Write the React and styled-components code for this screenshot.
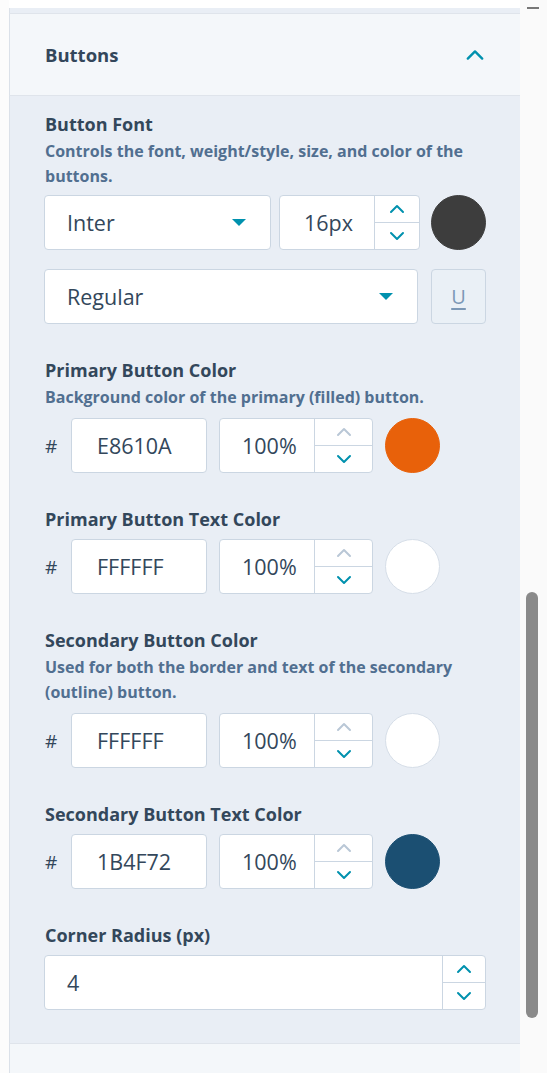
import styled, { createGlobalStyle } from 'styled-components';

const TEAL = '#0091ae';
const TEXT = '#33475b';
const MUTED = '#516f90';
const LINE = '#cbd6e2';

const GlobalStyle = createGlobalStyle`
  html, body { margin: 0; padding: 0; background: #ffffff; }
  body { font-family: "Open Sans", Lato, sans-serif; color: ${TEXT}; }
  * { box-sizing: border-box; }
`;

const Page = styled.div`
  display: flex;
  height: 1073px;
  overflow: hidden;
  background: #ffffff;
`;

const Gutter = styled.div`
  width: 9px;
  flex-shrink: 0;
  background: #fcfcfc;
`;

const Panel = styled.div`
  width: 511px;
  flex-shrink: 0;
  display: flex;
  flex-direction: column;
  padding-top: 8px;
  background: #ffffff;
`;

const PrevSection = styled.div`
  height: 6px;
  background: #e9eef5;
  border-left: 1px solid #dbe1e9;
  border-bottom: 1px solid #dfe4eb;
`;

const Header = styled.div`
  height: 82px;
  display: flex;
  align-items: center;
  justify-content: space-between;
  padding: 0 35px 0 35px;
  background: #f4f7fa;
  border-left: 1px solid #dbe1e9;
  border-bottom: 1px solid #dfe4eb;
`;

const HeaderTitle = styled.div`
  font-size: 18.5px;
  font-weight: 700;
  color: ${TEXT};
`;

const Body = styled.div`
  display: flex;
  flex-direction: column;
  gap: 34px;
  padding: 16px 34px 33px;
  background: #e9eef5;
  border-left: 1px solid #dbe1e9;
  border-bottom: 1px solid #dfe4eb;
`;

const NextSection = styled.div`
  flex: 1;
  background: #f4f7fa;
  border-left: 1px solid #dbe1e9;
`;

const Group = styled.div`
  display: flex;
  flex-direction: column;
`;

const Label = styled.div`
  font-size: 18px;
  line-height: 24px;
  font-weight: 700;
  padding-left: 1px;
  color: ${TEXT};
`;

const Desc = styled.div`
  margin-top: 3px;
  font-size: 16px;
  line-height: 25px;
  font-weight: 700;
  padding-left: 1px;
  color: ${MUTED};
`;

const Row = styled.div`
  display: flex;
  align-items: center;
  gap: ${(p) => p.gap || 12}px;
  margin-top: ${(p) => p.top ?? 8}px;
`;

const Box = styled.div`
  display: flex;
  align-items: stretch;
  width: ${(p) => (p.width ? `${p.width}px` : 'auto')};
  flex: ${(p) => (p.width ? '0 0 auto' : '1')};
  height: 55px;
  background: #ffffff;
  border: 1px solid ${LINE};
  border-radius: 4px;
  overflow: hidden;
`;

const Value = styled.div`
  flex: 1;
  display: flex;
  align-items: center;
  padding-left: ${(p) => p.pad ?? 22}px;
  font-size: 21.5px;
  color: ${TEXT};
`;

const Caret = styled.div`
  align-self: center;
  margin-right: 24px;
  width: 0;
  height: 0;
  border-left: 7px solid transparent;
  border-right: 7px solid transparent;
  border-top: 7px solid ${TEAL};
`;

const Stepper = styled.div`
  width: ${(p) => p.width}px;
  display: flex;
  flex-direction: column;
  border-left: 1px solid ${LINE};
`;

const StepHalf = styled.div`
  flex: 1;
  display: flex;
  align-items: center;
  justify-content: center;
  & + & { border-top: 1px solid ${LINE}; }
`;

const Swatch = styled.div`
  width: 55px;
  height: 55px;
  flex-shrink: 0;
  border-radius: 50%;
  background: ${(p) => p.color};
  border: 1px solid ${(p) => (p.color === '#ffffff' ? '#d6dee8' : p.color)};
`;

const Hash = styled.span`
  width: 14px;
  font-size: 19px;
  color: ${TEXT};
  margin-left: 1px;
`;

const UnderlineBtn = styled.div`
  width: 55px;
  height: 55px;
  flex-shrink: 0;
  display: flex;
  align-items: center;
  justify-content: center;
  border: 1px solid ${LINE};
  border-radius: 4px;
  background: #eaf0f6;
  font-size: 20px;
  color: #7c98b6;
  text-decoration: underline;
  text-underline-offset: 4px;
`;

const ScrollCol = styled.div`
  flex: 1;
  display: flex;
  flex-direction: column;
  align-items: flex-start;
  padding-left: 6px;
  background: #fafafa;
`;

const ScrollDash = styled.div`
  width: 12px;
  height: 2px;
  margin-top: 7px;
  background: #777777;
  margin-left: 1px;
`;

const Thumb = styled.div`
  width: 12px;
  height: 426px;
  margin-top: 583px;
  border-radius: 6px;
  background: #8a8a8a;
`;

function Chevron({ up, color, size = 16 }) {
  const h = Math.round(size * 0.62);
  return (
    <svg width={size} height={h} viewBox="0 0 16 10">
      <path
        d={up ? 'M2 8 L8 2 L14 8' : 'M2 2 L8 8 L14 2'}
        fill="none"
        stroke={color}
        strokeWidth="2"
        strokeLinecap="round"
        strokeLinejoin="round"
      />
    </svg>
  );
}

function Spin({ width, upOff }) {
  return (
    <Stepper width={width}>
      <StepHalf>
        <Chevron up color={upOff ? '#b9c7d6' : TEAL} />
      </StepHalf>
      <StepHalf>
        <Chevron color={TEAL} />
      </StepHalf>
    </Stepper>
  );
}

function ColorRow({ hex, color }) {
  return (
    <Row>
      <Hash>#</Hash>
      <Box width={136}>
        <Value pad={25}>{hex}</Value>
      </Box>
      <Box width={154}>
        <Value>100%</Value>
        <Spin width={58} upOff />
      </Box>
      <Swatch color={color} />
    </Row>
  );
}

const colorGroups = [
  {
    label: 'Primary Button Color',
    desc: 'Background color of the primary (filled) button.',
    hex: 'E8610A',
    color: '#e8610a',
  },
  { label: 'Primary Button Text Color', hex: 'FFFFFF', color: '#ffffff' },
  {
    label: 'Secondary Button Color',
    desc: 'Used for both the border and text of the secondary (outline) button.',
    hex: 'FFFFFF',
    color: '#ffffff',
  },
  { label: 'Secondary Button Text Color', hex: '1B4F72', color: '#1b4f72' },
];

export default function App() {
  return (
    <>
      <GlobalStyle />
      <Page>
        <Gutter />
        <Panel>
          <PrevSection />
          <Header>
            <HeaderTitle>Buttons</HeaderTitle>
            <Chevron up color={TEAL} size={20} />
          </Header>
          <Body>
            <Group>
              <Label>Button Font</Label>
              <Desc>Controls the font, weight/style, size, and color of the buttons.</Desc>
              <Row gap={8} top={6}>
                <Box width={227}>
                  <Value>Inter</Value>
                  <Caret />
                </Box>
                <Box width={141}>
                  <Value pad={24}>16px</Value>
                  <Spin width={45} />
                </Box>
                <Swatch color="#3d3d3d" style={{ marginLeft: 3 }} />
              </Row>
              <Row gap={13} top={19}>
                <Box>
                  <Value>Regular</Value>
                  <Caret />
                </Box>
                <UnderlineBtn>U</UnderlineBtn>
              </Row>
            </Group>
            {colorGroups.map((g) => (
              <Group key={g.label}>
                <Label>{g.label}</Label>
                {g.desc && <Desc>{g.desc}</Desc>}
                <ColorRow hex={g.hex} color={g.color} />
              </Group>
            ))}
            <Group>
              <Label>Corner Radius (px)</Label>
              <Row>
                <Box>
                  <Value>4</Value>
                  <Spin width={43} />
                </Box>
              </Row>
            </Group>
          </Body>
          <NextSection />
        </Panel>
        <ScrollCol>
          <ScrollDash />
          <Thumb />
        </ScrollCol>
      </Page>
    </>
  );
}
